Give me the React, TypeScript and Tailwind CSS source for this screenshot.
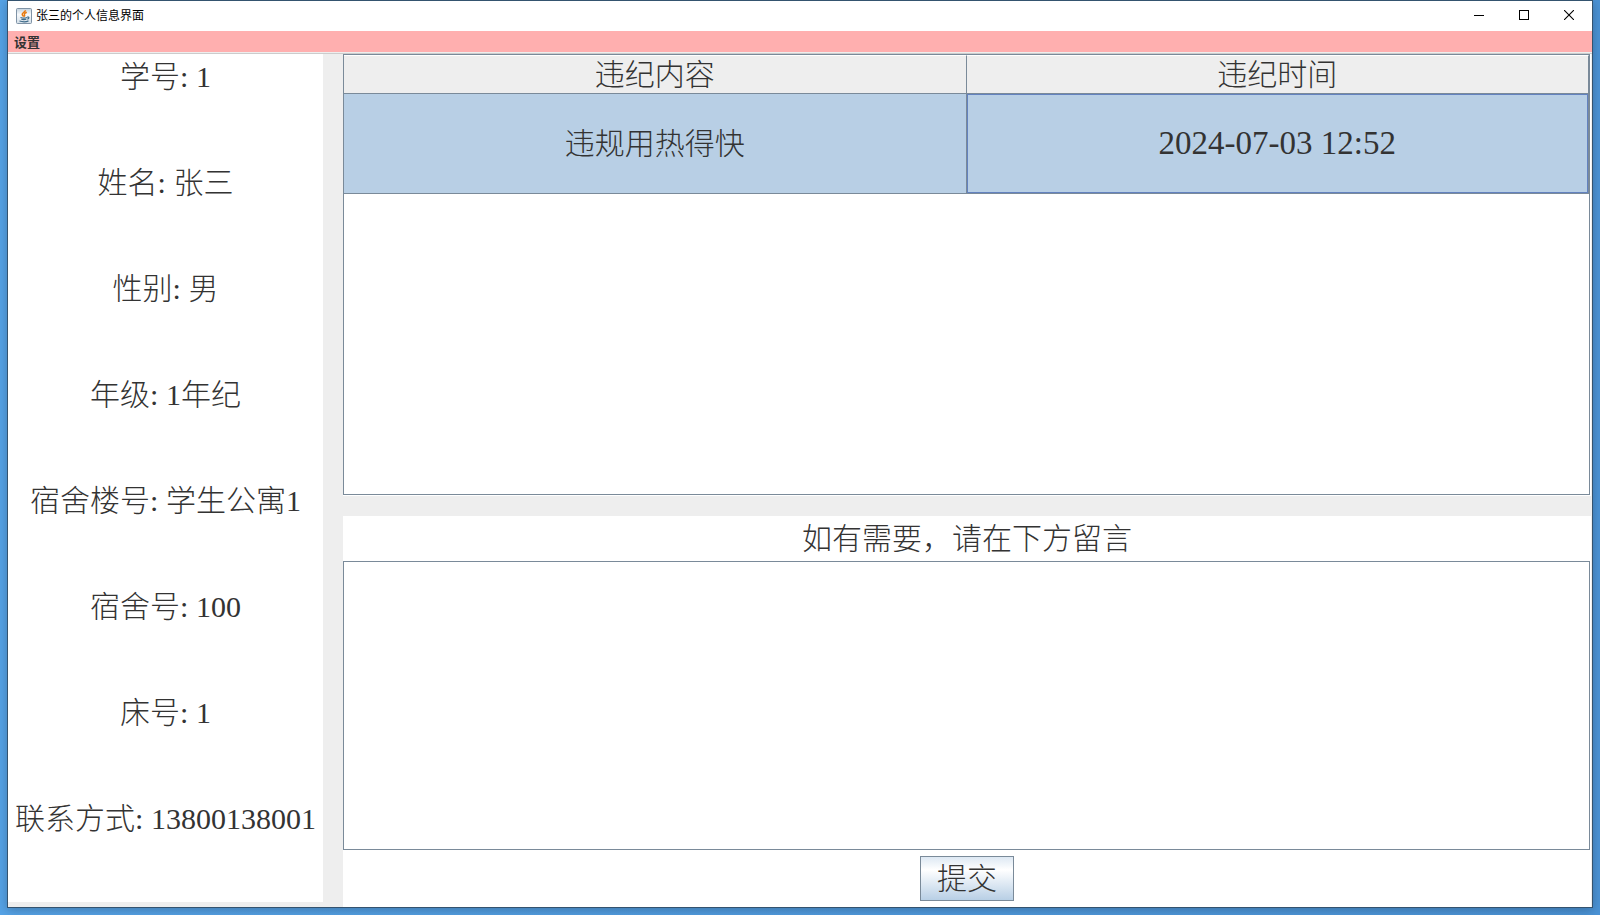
interface InfoItem {
  label: string;
  value: string;
}

interface Violation {
  content: string;
  time: string;
}

const info: InfoItem[] = [
  { label: "学号", value: "1" },
  { label: "姓名", value: "张三" },
  { label: "性别", value: "男" },
  { label: "年级", value: "1年纪" },
  { label: "宿舍楼号", value: "学生公寓1" },
  { label: "宿舍号", value: "100" },
  { label: "床号", value: "1" },
  { label: "联系方式", value: "13800138001" },
];

const violations: Violation[] = [
  { content: "违规用热得快", time: "2024-07-03 12:52" },
];

function JavaIcon() {
  return (
    <svg width="16" height="16" viewBox="0 0 16 16" fill="none" aria-hidden="true">
      <defs>
        <linearGradient id="tile" x1="0" y1="0" x2="0" y2="1">
          <stop offset="0" stopColor="#c3d2de" />
          <stop offset="0.4" stopColor="#f7f9fb" />
          <stop offset="1" stopColor="#d3dee7" />
        </linearGradient>
      </defs>
      <rect x="0.5" y="0.5" width="15" height="15" rx="1" fill="url(#tile)" stroke="#7f93a6" />
      <path d="M9.500 2.200C9.500 4 6 4.600 6.200 6.300c.1.900 1.200 1.300 1.300 2.300M10.800 4.300C9 5 8 5.800 8.500 6.800c.3.600.3 1.100-.3 1.800" stroke="#e87a10" strokeWidth="1.500" />
      <path d="M4.500 9.500c2 .6 5 .6 6.500 0M5.300 11.300c1.500.5 3.500.5 5 0M3.500 13c2.500.8 7 .8 9-.1M11.200 9.200c2.200-.6 2.300 1.200.1 1.900" stroke="#3f6b8a" strokeWidth="1.200" />
    </svg>
  );
}

function WindowControls() {
  return (
    <div className="flex h-full">
      <button aria-label="最小化" className="flex w-[45px] items-center justify-center">
        <svg width="10" height="10" viewBox="0 0 10 10" shapeRendering="crispEdges">
          <path d="M0 5.500h10" stroke="#000" />
        </svg>
      </button>
      <button aria-label="最大化" className="flex w-[45px] items-center justify-center">
        <svg width="10" height="10" viewBox="0 0 10 10" fill="none" shapeRendering="crispEdges">
          <path d="M.5.5h9v9h-9z" stroke="#000" />
        </svg>
      </button>
      <button aria-label="关闭" className="flex w-[46px] items-center justify-center">
        <svg width="10" height="10" viewBox="0 0 10 10">
          <path d="M0 0l10 10M10 0L0 10" stroke="#000" strokeWidth="1.100" />
        </svg>
      </button>
    </div>
  );
}

function InfoPanel() {
  return (
    <dl className="mb-[5px] flex w-[315px] shrink-0 flex-col bg-white">
      {info.map((item) => (
        <div key={item.label} className="flex flex-1 justify-center whitespace-pre leading-[45px]">
          <dt>{item.label}: </dt>
          <dd>{item.value}</dd>
        </div>
      ))}
    </dl>
  );
}

function ViolationTable() {
  return (
    <div className="mr-px h-[442px] bg-white pr-px pb-px">
      <div className="h-full border border-[#7a8a99]">
        <table className="w-full table-fixed border-separate border-spacing-0 text-center">
          <thead>
            <tr className="h-[39px] bg-[#eeeeee]">
              <th className="border-r border-b border-[#7a8a99] border-t border-t-white p-0 font-light leading-9">违纪内容</th>
              <th className="border-r border-b border-[#7a8a99] border-t border-t-white p-0 font-light leading-9">违纪时间</th>
            </tr>
          </thead>
          <tbody>
            {violations.map((row) => (
              <tr key={row.time} className="h-[100px] bg-[#b8cfe5]">
                <td className="border-r border-b border-[#7a8a99] p-0">{row.content}</td>
                <td className="border-r border-b border-[#7a8a99] p-0 text-[33px] inset-ring inset-ring-[#6382bf]">
                  {row.time}
                </td>
              </tr>
            ))}
          </tbody>
        </table>
      </div>
    </div>
  );
}

function MessageForm() {
  return (
    <form className="mr-px flex flex-1 flex-col bg-white" onSubmit={(e) => e.preventDefault()}>
      <label htmlFor="message" className="text-center leading-[45px]">
        如有需要，请在下方留言
      </label>
      <textarea
        id="message"
        className="mr-px flex-1 resize-none border border-[#7a8a99] bg-white px-1 outline-none"
      />
      <div className="flex justify-center py-1.5">
        <button
          type="submit"
          className="h-[45px] w-[94px] border border-[#7a8a99] bg-linear-to-b from-[#dde8f3] via-white via-30% to-[#b8cfe5] leading-10"
        >
          提交
        </button>
      </div>
    </form>
  );
}

export default function App() {
  return (
    <div className="flex min-h-screen bg-linear-to-r from-[#56a3e7] to-[#4b93d6] px-[7px] pb-[7px] font-['Liberation_Serif','Noto_Sans_CJK_SC',serif] text-[#333333]">
      <div className="flex flex-1 flex-col border border-[#34536f] bg-[#eeeeee] shadow-[0_2px_10px_rgba(0,0,0,0.25)]">
        <header className="flex h-[30px] items-center justify-between bg-white pl-2 font-['Noto_Sans_CJK_SC',sans-serif]">
          <div className="flex items-center gap-1">
            <JavaIcon />
            <h1 className="pb-0.5 text-xs text-black">张三的个人信息界面</h1>
          </div>
          <div className="h-7 self-start">
            <WindowControls />
          </div>
        </header>
        <nav className="flex h-[22px] items-center border-b border-[#eeeeee] bg-[#ffafaf] px-1.5 font-['Noto_Sans_CJK_SC',sans-serif]">
          <button className="text-[13px] leading-5 font-bold">设置</button>
        </nav>
        <main className="flex flex-1 gap-5 border-t border-[#cccccc] text-[30px] font-light">
          <InfoPanel />
          <div className="flex min-w-0 flex-1 flex-col gap-5">
            <ViolationTable />
            <MessageForm />
          </div>
        </main>
      </div>
    </div>
  );
}
